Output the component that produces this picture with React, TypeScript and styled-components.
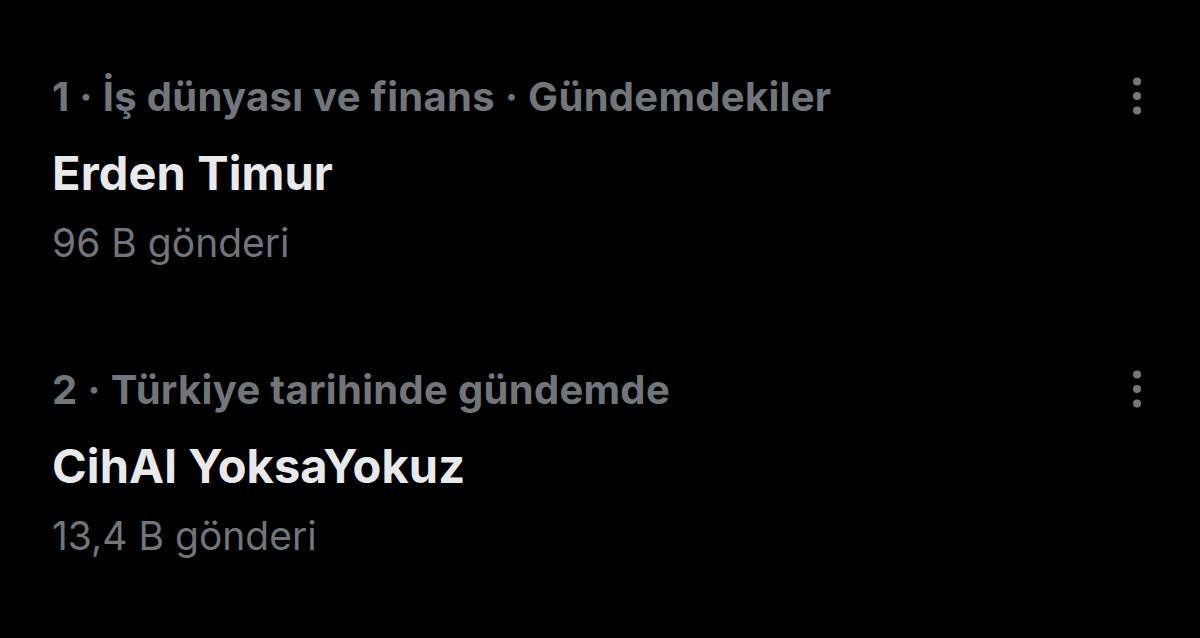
import React from "react"
import styled, { createGlobalStyle } from "styled-components"

const GlobalStyle = createGlobalStyle`
  html, body {
    margin: 0;
    padding: 0;
    background: #000;
  }
  body {
    font-family: Inter, "Noto Sans", "Liberation Sans", sans-serif;
    -webkit-font-smoothing: antialiased;
  }
`

const Page = styled.div`
  width: 1200px;
  height: 638px;
  background: #000;
  box-sizing: border-box;
  padding-top: 73px;
  display: flex;
  flex-direction: column;
  gap: 100px;
`

const Trend = styled.div`
  display: flex;
  justify-content: space-between;
  align-items: flex-start;
  padding: 0 39px 0 52px;
`

const Info = styled.div`
  display: flex;
  flex-direction: column;
`

const Meta = styled.div`
  color: #71767b;
  font-size: 40px;
  font-weight: 700;
  line-height: 47px;
  letter-spacing: 0.3px;
`

const Title = styled.div`
  color: #e7e9ea;
  font-size: 47px;
  font-weight: 700;
  line-height: 57px;
  letter-spacing: 0.1px;
  margin-top: 24px;
`

const Count = styled.div`
  color: #71767b;
  font-size: 39px;
  font-weight: 400;
  line-height: 47px;
  letter-spacing: 0;
  margin-top: 18px;
`

const MoreButton = styled.button`
  border: none;
  background: none;
  padding: 0;
  margin-top: 4px;
  width: 48px;
  height: 38px;
  display: flex;
  align-items: center;
  justify-content: center;
  cursor: pointer;
`

const Dots = () => (
  <svg width="10" height="38" viewBox="0 0 10 38" aria-hidden>
    <circle cx="5" cy="4.5" r="4" fill="#75797d" />
    <circle cx="5" cy="19" r="4" fill="#75797d" />
    <circle cx="5" cy="33.5" r="4" fill="#75797d" />
  </svg>
)

type TrendItem = {
  meta: string
  title: string
  count: string
}

const trends: TrendItem[] = [
  { meta: "1 · İş dünyası ve finans · Gündemdekiler", title: "Erden Timur", count: "96 B gönderi" },
  { meta: "2 · Türkiye tarihinde gündemde", title: "CihAl YoksaYokuz", count: "13,4 B gönderi" },
]

export default function App() {
  return (
    <>
      <GlobalStyle />
      <Page>
        {trends.map((t) => (
          <Trend key={t.title}>
            <Info>
              <Meta>{t.meta}</Meta>
              <Title>{t.title}</Title>
              <Count>{t.count}</Count>
            </Info>
            <MoreButton aria-label="Daha fazla">
              <Dots />
            </MoreButton>
          </Trend>
        ))}
      </Page>
    </>
  )
}
